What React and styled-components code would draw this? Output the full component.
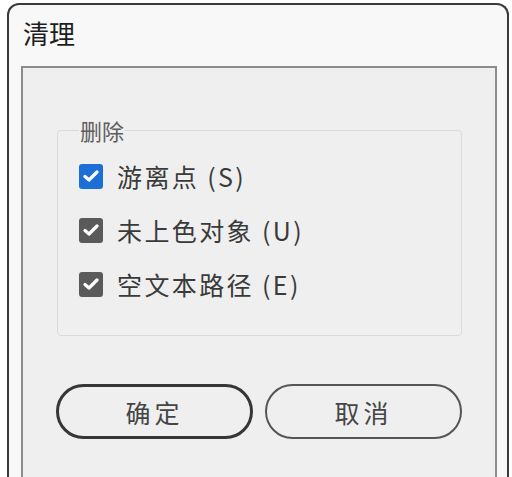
import styled, { createGlobalStyle } from 'styled-components';

const GlobalStyle = createGlobalStyle`
  html, body {
    margin: 0;
    padding: 0;
    background: #ffffff;
    overflow: hidden;
  }
  body {
    font-family: "Noto Sans CJK SC", "Noto Sans", sans-serif;
  }
`;

const Dialog = styled.div`
  margin: 3px 0 0 7px;
  width: 502px;
  height: 480px;
  display: flex;
  flex-direction: column;
  border: 2px solid #3a3a3a;
  border-bottom: none;
  border-radius: 12px 12px 0 0;
  background: #f8f8f8;
  box-sizing: border-box;
`;

const TitleBar = styled.div`
  height: 61px;
  display: flex;
  align-items: center;
  padding-left: 14px;
  padding-bottom: 6px;
  box-sizing: border-box;
  font-size: 26px;
  color: #1e1e1e;
`;

const Panel = styled.div`
  flex: 1;
  margin: 0 10px 0 12px;
  border: 2px solid #8c8c8c;
  border-bottom: none;
  background: #efefef;
  display: flex;
  flex-direction: column;
`;

const Group = styled.fieldset`
  margin: 49px 0 0 34px;
  width: 405px;
  box-sizing: border-box;
  padding: 6px 18px 24px 21px;
  border: 1px solid #dadada;
  border-radius: 4px;
  display: flex;
  flex-direction: column;
`;

const Legend = styled.legend`
  padding: 0 1px;
  font-size: 22px;
  line-height: 26px;
  color: #5e5e5e;
`;

const Row = styled.label`
  height: 54px;
  display: flex;
  align-items: center;
  gap: 14px;
  font-size: 25px;
  letter-spacing: 2.4px;
  color: #3a3a3a;
`;

const Box = styled.span`
  width: 24px;
  height: 25px;
  border-radius: 3px;
  background: ${(p) => (p.$accent ? '#1d6fd8' : '#5a5a5a')};
  display: flex;
  align-items: center;
  justify-content: center;
  flex: none;
`;

const Buttons = styled.div`
  display: flex;
  gap: 12px;
  margin: 48px 0 0 33px;
`;

const Button = styled.button`
  width: 197px;
  height: 55px;
  border-radius: 28px;
  border: ${(p) => (p.$primary ? '3px solid #363636' : '2px solid #555555')};
  background: transparent;
  font-family: "Noto Sans CJK SC", "Noto Sans", sans-serif;
  font-size: 25px;
  letter-spacing: 4px;
  color: #454545;
  padding: 0;
`;

const Check = ({ accent }) => (
  <Box $accent={accent}>
    <svg width="16" height="14" viewBox="0 0 16 14">
      <polyline points="2,7.5 6,11 14,3" fill="none" stroke="#ffffff" strokeWidth="3.2" strokeLinecap="round" strokeLinejoin="round" />
    </svg>
  </Box>
);

const items = [
  { label: '游离点 (S)', accent: true },
  { label: '未上色对象 (U)' },
  { label: '空文本路径 (E)' },
];

export default function App() {
  return (
    <>
      <GlobalStyle />
      <Dialog>
        <TitleBar>清理</TitleBar>
        <Panel>
          <Group>
            <Legend>删除</Legend>
            {items.map((it) => (
              <Row key={it.label}>
                <Check accent={it.accent} />
                {it.label}
              </Row>
            ))}
          </Group>
          <Buttons>
            <Button $primary>确定</Button>
            <Button>取消</Button>
          </Buttons>
        </Panel>
      </Dialog>
    </>
  );
}
